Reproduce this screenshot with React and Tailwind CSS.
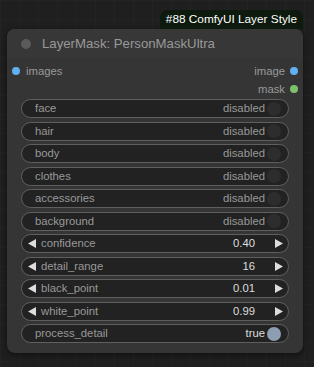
const toggles = [
  ['face', false],
  ['hair', false],
  ['body', false],
  ['clothes', false],
  ['accessories', false],
  ['background', false],
]

const numbers = [
  ['confidence', '0.40'],
  ['detail_range', '16'],
  ['black_point', '0.01'],
  ['white_point', '0.99'],
]

function Toggle({ label, on }) {
  return (
    <div className="h-[19px] flex items-center rounded-full border border-[#5f5f5f] bg-[#222] pl-[13px] pr-[7px]">
      <span className="text-[#999]">{label}</span>
      <span className={'ml-auto mr-[2px] ' + (on ? 'text-[#ddd]' : 'text-[#999]')}>{on ? 'true' : 'disabled'}</span>
      <span className={'w-[14px] h-[14px] rounded-full ' + (on ? 'bg-[#8d9db2]' : 'bg-[#2d2d2d]')} />
    </div>
  )
}

function Number({ label, value }) {
  return (
    <div className="h-[19px] flex items-center rounded-full border border-[#5f5f5f] bg-[#222] pl-[6px] pr-[5px]">
      <svg width="8" height="9" viewBox="0 0 8 9" className="shrink-0"><path d="M0 4.5 8 0v9z" fill="#ddd" /></svg>
      <span className="ml-[5px] text-[#999]">{label}</span>
      <span className="ml-auto text-[#ddd]">{value}</span>
      <svg width="8" height="9" viewBox="0 0 8 9" className="shrink-0 ml-[20px]"><path d="M8 4.5 0 0v9z" fill="#ddd" /></svg>
    </div>
  )
}

export default function App() {
  return (
    <div className="w-[314px] h-[367px] overflow-hidden bg-[#1f1f1f] bg-[linear-gradient(#232323_1px,transparent_1px),linear-gradient(90deg,#232323_1px,transparent_1px)] bg-[size:19px_19px] font-['Liberation_Sans',Arial,sans-serif]">
      <div className="flex justify-end pr-[11px] pt-[10px]">
        <div className="h-[19px] px-[6px] rounded-t-[8px] bg-[#0d1a0d] text-white text-[11.8px] leading-[19px]">
          #88 ComfyUI Layer Style
        </div>
      </div>
      <div className="ml-[7px] w-[296px] rounded-[8px] bg-[#353535] shadow-[0_2px_6px_rgba(0,0,0,0.5)] pb-[10px]">
        <div className="h-[29px] flex items-center pl-[14px] rounded-t-[8px] bg-[#373737]">
          <span className="w-[10px] h-[10px] rounded-full bg-[#5a5a5a]" />
          <span className="ml-[11px] text-[13.2px] text-[#999]">LayerMask: PersonMaskUltra</span>
        </div>
        <div className="pt-[4px] text-[11.3px]">
          <div className="h-[18px] flex items-center pl-[5px] pr-[5px]">
            <span className="w-[8px] h-[8px] rounded-full bg-[#61b0f3]" />
            <span className="ml-[6px] text-[#999]">images</span>
            <span className="ml-auto text-[#999]">image</span>
            <span className="ml-[5px] w-[8px] h-[8px] rounded-full bg-[#61b0f3]" />
          </div>
          <div className="h-[18px] flex items-center justify-end pr-[5px]">
            <span className="text-[#999]">mask</span>
            <span className="ml-[5px] w-[8px] h-[8px] rounded-full bg-[#7cc16c]" />
          </div>
        </div>
        <div className="mt-[1px] px-[14px] flex flex-col gap-[3.5px] text-[11.3px]">
          {toggles.map(([l, on]) => <Toggle key={l} label={l} on={on} />)}
          {numbers.map(([l, v]) => <Number key={l} label={l} value={v} />)}
          <Toggle label="process_detail" on />
        </div>
      </div>
    </div>
  )
}
